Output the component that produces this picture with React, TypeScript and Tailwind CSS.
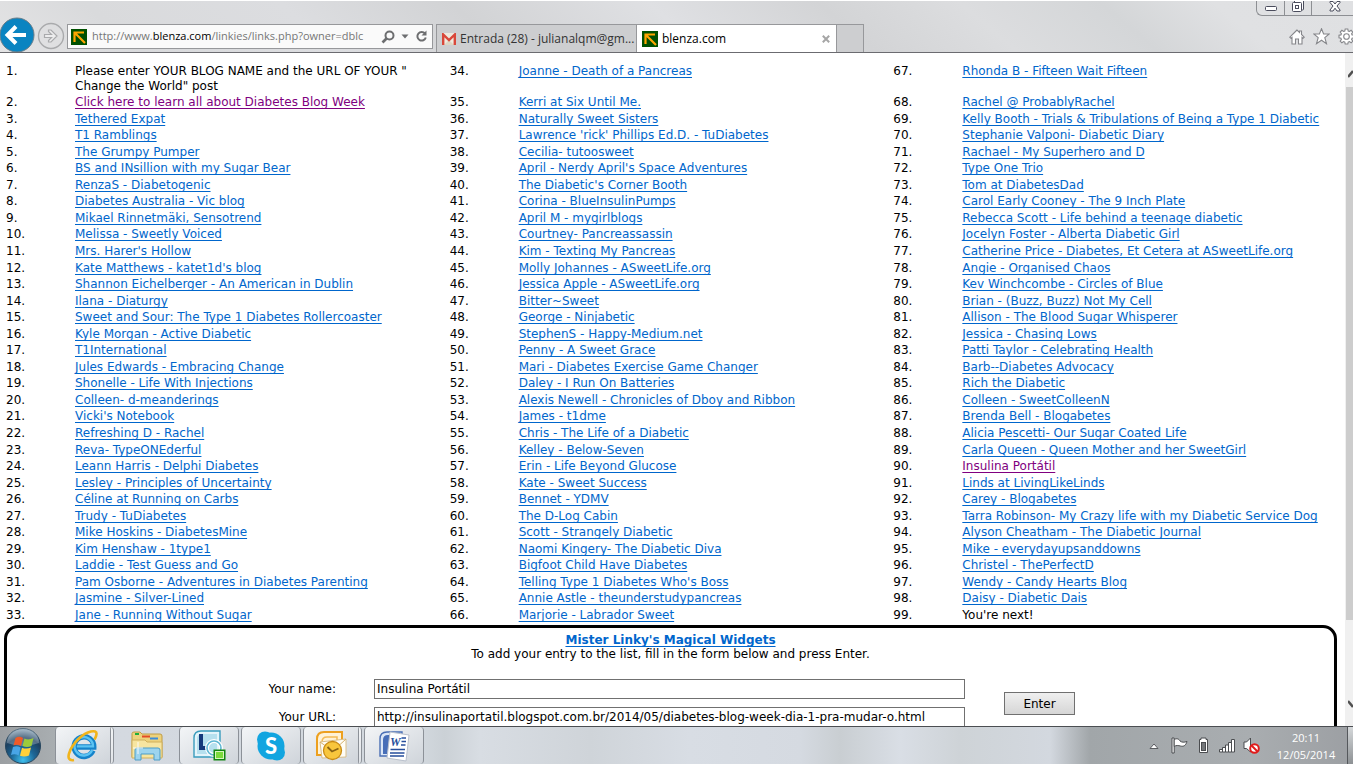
import type { ReactNode } from 'react';

type Entry = { text: string; kind?: 'plain' | 'visited' };

const visited = (text: string): Entry => ({ text, kind: 'visited' });
const plain = (text: string): Entry => ({ text, kind: 'plain' });
const link = (text: string): Entry => ({ text });

const columns: Entry[][] = [
    [
        plain('Please enter YOUR BLOG NAME and the URL OF YOUR " Change the World" post'),
        visited('Click here to learn all about Diabetes Blog Week'),
        ...[
            'Tethered Expat',
            'T1 Ramblings',
            'The Grumpy Pumper',
            'BS and INsillion with my Sugar Bear',
            'RenzaS - Diabetogenic',
            'Diabetes Australia - Vic blog',
            'Mikael Rinnetmäki, Sensotrend',
            'Melissa - Sweetly Voiced',
            "Mrs. Harer's Hollow",
            "Kate Matthews - katet1d's blog",
            'Shannon Eichelberger - An American in Dublin',
            'Ilana - Diaturgy',
            'Sweet and Sour: The Type 1 Diabetes Rollercoaster',
            'Kyle Morgan - Active Diabetic',
            'T1International',
            'Jules Edwards - Embracing Change',
            'Shonelle - Life With Injections',
            'Colleen- d-meanderings',
            "Vicki's Notebook",
            'Refreshing D - Rachel',
            'Reva- TypeONEderful',
            'Leann Harris - Delphi Diabetes',
            'Lesley - Principles of Uncertainty',
            'Céline at Running on Carbs',
            'Trudy - TuDiabetes',
            'Mike Hoskins - DiabetesMine',
            'Kim Henshaw - 1type1',
            'Laddie - Test Guess and Go',
            'Pam Osborne - Adventures in Diabetes Parenting',
            'Jasmine - Silver-Lined',
            'Jane - Running Without Sugar',
        ].map(link),
    ],
    [
        'Joanne - Death of a Pancreas',
        'Kerri at Six Until Me.',
        'Naturally Sweet Sisters',
        "Lawrence 'rick' Phillips Ed.D. - TuDiabetes",
        'Cecilia- tutoosweet',
        "April - Nerdy April's Space Adventures",
        "The Diabetic's Corner Booth",
        'Corina - BlueInsulinPumps',
        'April M - mygirlblogs',
        'Courtney- Pancreassassin',
        'Kim - Texting My Pancreas',
        'Molly Johannes - ASweetLife.org',
        'Jessica Apple - ASweetLife.org',
        'Bitter~Sweet',
        'George - Ninjabetic',
        'StephenS - Happy-Medium.net',
        'Penny - A Sweet Grace',
        'Mari - Diabetes Exercise Game Changer',
        'Daley - I Run On Batteries',
        'Alexis Newell - Chronicles of Dboy and Ribbon',
        'James - t1dme',
        'Chris - The Life of a Diabetic',
        'Kelley - Below-Seven',
        'Erin - Life Beyond Glucose',
        'Kate - Sweet Success',
        'Bennet - YDMV',
        'The D-Log Cabin',
        'Scott - Strangely Diabetic',
        'Naomi Kingery- The Diabetic Diva',
        'Bigfoot Child Have Diabetes',
        "Telling Type 1 Diabetes Who's Boss",
        'Annie Astle - theunderstudypancreas',
        'Marjorie - Labrador Sweet',
    ].map(link),
    [
        ...[
            'Rhonda B - Fifteen Wait Fifteen',
            'Rachel @ ProbablyRachel',
            'Kelly Booth - Trials & Tribulations of Being a Type 1 Diabetic',
            'Stephanie Valponi- Diabetic Diary',
            'Rachael - My Superhero and D',
            'Type One Trio',
            'Tom at DiabetesDad',
            'Carol Early Cooney - The 9 Inch Plate',
            'Rebecca Scott - Life behind a teenage diabetic',
            'Jocelyn Foster - Alberta Diabetic Girl',
            'Catherine Price - Diabetes, Et Cetera at ASweetLife.org',
            'Angie - Organised Chaos',
            'Kev Winchcombe - Circles of Blue',
            'Brian - (Buzz, Buzz) Not My Cell',
            'Allison - The Blood Sugar Whisperer',
            'Jessica - Chasing Lows',
            'Patti Taylor - Celebrating Health',
            'Barb--Diabetes Advocacy',
            'Rich the Diabetic',
            'Colleen - SweetColleenN',
            'Brenda Bell - Blogabetes',
            'Alicia Pescetti- Our Sugar Coated Life',
            'Carla Queen - Queen Mother and her SweetGirl',
        ].map(link),
        visited('Insulina Portátil'),
        ...[
            'Linds at LivingLikeLinds',
            'Carey - Blogabetes',
            'Tarra Robinson- My Crazy life with my Diabetic Service Dog',
            'Alyson Cheatham - The Diabetic Journal',
            'Mike - everydayupsanddowns',
            'Christel - ThePerfectD',
            'Wendy - Candy Hearts Blog',
            'Daisy - Diabetic Dais',
        ].map(link),
        plain("You're next!"),
    ],
];

const EntryText = ({ entry }: { entry: Entry }) => {
    if (entry.kind === 'plain') return <>{entry.text}</>;
    return (
        <a
            href="#"
            className={
                entry.kind === 'visited'
                    ? 'text-[#800080] underline underline-offset-2 [text-decoration-skip-ink:none]'
                    : 'text-[#0066cc] underline underline-offset-2 [text-decoration-skip-ink:none]'
            }
        >
            {entry.text}
        </a>
    );
};

const BlenzaIcon = () => (
    <svg width="16" height="16" viewBox="0 0 16 16" className="shrink-0">
        <rect width="16" height="16" fill="#005000" />
        <path d="M3.5 13V3.5H13M4 4L14 14" fill="none" stroke="#ffa500" strokeWidth="2.2" />
    </svg>
);

const BrowserBar = () => (
    <header className="flex h-[53px] shrink-0 items-end border-t border-b border-t-white border-b-[#6b6b70] bg-[linear-gradient(40deg,#e4e4e5_0%,#d9dadc_10%,#dcdde0_24%,#d2d3d5_36%,#dfe0e3_50%,#d3d4d6_62%,#dcdddf_72%,#d4d6d8_82%,#e0e1e3_90%,#dfe0e2_100%)] font-['Open_Sans',sans-serif] text-xs text-black">
        <button aria-label="Back" className="h-[35px] w-[35px] shrink-0">
            <svg width="35" height="35" viewBox="0 0 35 35">
                <circle cx="17" cy="18" r="17" fill="#0a84c1" stroke="#6a7d88" />
                <path d="M26 18H8M16 9.5L7.5 18L16 26.5" fill="none" stroke="#fff" strokeWidth="4" />
            </svg>
        </button>
        <button aria-label="Forward" className="mb-0.5 ml-0.5 h-7 w-7 shrink-0">
            <svg width="28" height="28" viewBox="0 0 28 28" fill="none" stroke="#a9aaac">
                <circle cx="14" cy="14" r="12.5" strokeWidth="1.4" />
                <path d="M7.5 12.5H14.5L11.5 9.5V8H14L20 14L14 20H11.5V18.5L14.5 15.5H7.5Z" fill="#ededee" strokeWidth="1.2" />
            </svg>
        </button>
        <div className="mb-[3px] ml-0.5 flex h-[25px] w-[366px] shrink-0 items-center border border-[#97989b] bg-[#fafafa] pl-[3px]">
            <BlenzaIcon />
            <div role="textbox" aria-label="Address" className="ml-[5px] w-[286px] shrink-0 whitespace-nowrap text-[11px] text-[#767676]">
                http://www.<span className="text-black">blenza.com</span>/linkies/links.php?owner=dblc
            </div>
            <button aria-label="Search" className="ml-[3px]">
                <svg width="14" height="14" viewBox="0 0 14 14" fill="none" stroke="#6d6e70">
                    <circle cx="8.5" cy="5.5" r="4" strokeWidth="2" />
                    <path d="M5.5 8.5L1.5 12.5" strokeWidth="2.6" />
                </svg>
            </button>
            <button aria-label="Address history" className="ml-1.5">
                <svg width="8" height="5" viewBox="0 0 8 5"><path d="M0.5 0.5H7.5L4 4.5Z" fill="#6d6e70" /></svg>
            </button>
            <button aria-label="Refresh" className="ml-1.5">
                <svg width="13" height="13" viewBox="0 0 13 13">
                    <path d="M10 3.5A4.3 4.3 0 1 0 10.8 7.5" fill="none" stroke="#6d6e70" strokeWidth="2" />
                    <path d="M11.5 0.5V5.5H6.5Z" fill="#6d6e70" />
                </svg>
            </button>
        </div>
        <nav className="ml-[3px] flex h-7 min-w-0 whitespace-nowrap">
            <button className="flex w-[201px] items-center gap-1 border border-b-0 border-[#97989b] bg-[#cdced0] pl-[5px] text-[#333]">
                <svg width="14" height="12" viewBox="0 0 14 12" className="shrink-0">
                    <rect width="14" height="12" fill="#eeeadf" />
                    <path d="M2 12L7 7L12 12Z" fill="#dcd6c4" />
                    <path d="M1.2 12V1.5L7 7L12.8 1.5V12" fill="none" stroke="#d9483b" strokeWidth="2.4" />
                </svg>
                Entrada (28) - julianalqm@gm...
            </button>
            <button className="flex w-[199px] items-center gap-1 border-t border-[#97989b] bg-white px-[5px]">
                <BlenzaIcon />
                blenza.com
                <svg width="8" height="8" viewBox="0 0 8 8" className="mr-px ml-auto"><path d="M0.8 0.8L7.2 7.2M7.2 0.8L0.8 7.2" stroke="#a6a6a6" strokeWidth="2" /></svg>
            </button>
            <button aria-label="New tab" className="w-7 border border-b-0 border-[#97989b] bg-[#cdced0]" />
        </nav>
        <div className="ml-auto flex h-full w-[97px] shrink-0 flex-col items-end justify-between pb-[7px]">
            <div className="flex h-[15px] w-[97px] items-center rounded-bl-md border-b border-l border-[#8d8f93]">
                <button aria-label="Minimize" className="flex h-full w-7 items-center justify-center border-r border-[#8d8f93]">
                    <svg width="12" height="5" viewBox="0 0 12 5"><rect x="0.5" y="0.5" width="11" height="4" rx="1" fill="#fff" stroke="#4a4c5c" /></svg>
                </button>
                <button aria-label="Restore" className="flex h-full w-[27px] items-start justify-center border-r border-[#8d8f93]">
                    <svg width="12" height="12" viewBox="0 0 12 12" fill="#fff" stroke="#4a4c5c">
                        <rect x="2.5" y="-2" width="9" height="11" rx="1" />
                        <rect x="0.5" y="1.5" width="9" height="9" rx="1" />
                        <rect x="3.5" y="4.5" width="3" height="3" />
                    </svg>
                </button>
                <button aria-label="Close" className="flex h-full flex-1 items-start justify-center pl-1">
                    <svg width="12" height="11" viewBox="0 0 12 11"><path d="M1 0.5H4L6 3L8 0.5H11V1.5L8 5L11 9V10H8L6 7.2L4 10H1V9L4 5L1 1.5Z" fill="#fff" stroke="#4a4c5c" /></svg>
                </button>
            </div>
            <div className="flex w-16 gap-2">
                <button aria-label="Home">
                    <svg width="16" height="16" viewBox="0 0 16 16" fill="#fff" stroke="#85868a" strokeWidth="1.1">
                        <path d="M8 1L0.8 8.2L2 9.3L3 8.5V15H6.5V10H9.5V15H13V8.5L14 9.3L15.2 8.2L12.5 5.5V2H10.5V3.5Z" />
                    </svg>
                </button>
                <button aria-label="Favorites">
                    <svg width="17" height="17" viewBox="0 0 17 17" fill="#fff" stroke="#85868a" strokeWidth="1.1">
                        <path d="M8.5 0.8L10.6 6H16.2L11.8 9.6L13.5 15.6L8.5 12.2L3.5 15.6L5.2 9.6L0.8 6H6.4Z" />
                    </svg>
                </button>
                <button aria-label="Tools" className="w-[15px] overflow-hidden">
                    <svg width="17" height="17" viewBox="0 0 17 17" fill="#fff" stroke="#85868a" strokeWidth="1.1" className="max-w-none">
                        <path d="M7.2 1H9.8L10.2 3L11.4 3.5L13.1 2.3L14.8 4L13.6 5.7L14.1 6.9L16 7.2V9.8L14.1 10.2L13.6 11.4L14.8 13.1L13.1 14.8L11.4 13.6L10.2 14.1L9.8 16H7.2L6.8 14.1L5.6 13.6L3.9 14.8L2.2 13.1L3.4 11.4L2.9 10.2L1 9.8V7.2L2.9 6.9L3.4 5.7L2.2 4L3.9 2.3L5.6 3.5L6.8 3Z" />
                        <circle cx="8.5" cy="8.5" r="2.8" />
                    </svg>
                </button>
            </div>
        </div>
    </header>
);

const LinkTable = () => (
    <table className="h-[561px] w-full table-fixed border-collapse text-left">
        <colgroup>
            {columns.map((_, i) => [<col key={`n${i}`} className="w-[69px]" />, <col key={`t${i}`} />])}
        </colgroup>
        <tbody>
            {columns[0].map((_, row) => (
                <tr key={row} className="align-top">
                    {columns.map((entries, col) => [
                        <td key={`n${col}`} className={row === 0 ? 'pl-px leading-[15px]' : 'pb-px pl-px leading-[15px]'}>{col * 33 + row + 1}.</td>,
                        <td key={`t${col}`} className={row === 0 ? 'pr-6 pl-px leading-[15px]' : 'pb-px pl-px leading-[15px] whitespace-nowrap'}>
                            <EntryText entry={entries[row]} />
                        </td>,
                    ])}
                </tr>
            ))}
        </tbody>
    </table>
);

const EntryForm = () => (
    <form className="h-[150px] rounded-[14px] border-[3px] border-black pt-[5px] text-center" onSubmit={e => e.preventDefault()}>
        <p className="leading-[14px] font-bold">
            <a href="#" className="text-[#0066cc] underline underline-offset-2 [text-decoration-skip-ink:none]">Mister Linky's Magical Widgets</a>
        </p>
        <p className="leading-[14px]">To add your entry to the list, fill in the form below and press Enter.</p>
        <div className="mt-[18px] flex justify-center">
            <div className="flex flex-col gap-2">
                <div className="flex items-center gap-[38px]">
                    <label htmlFor="name" className="w-[70px] text-right whitespace-nowrap">Your name:</label>
                    <input id="name" defaultValue="Insulina Portátil" className="h-5 w-[591px] border border-[#707070] bg-white px-0.5" />
                </div>
                <div className="flex items-center gap-[38px]">
                    <label htmlFor="url" className="w-[70px] text-right whitespace-nowrap">Your URL:</label>
                    <input id="url" defaultValue="http://insulinaportatil.blogspot.com.br/2014/05/diabetes-blog-week-dia-1-pra-mudar-o.html" className="h-5 w-[591px] border border-[#707070] bg-white px-0.5" />
                </div>
            </div>
            <button type="submit" className="mt-[13px] ml-[39px] h-[23px] w-[71px] border border-[#707070] bg-linear-to-b from-[#efefef] to-[#d6d6d6]">Enter</button>
        </div>
    </form>
);

const Scrollbar = () => (
    <div aria-hidden="true" className="flex w-2 shrink-0 flex-col items-end overflow-hidden bg-[#f0f0f0]">
        <div className="flex h-[34px] w-[5px] items-center pt-2">
            <svg width="5" height="8" viewBox="0 0 5 8"><path d="M0 7L5 1" stroke="#505050" strokeWidth="2.5" /></svg>
        </div>
        <div className="h-[533px] w-[7px] bg-[#cdcdcd]" />
        <svg width="5" height="8" viewBox="0 0 5 8" className="mt-auto mb-[18px]"><path d="M0 1L5 7" stroke="#505050" strokeWidth="2.5" /></svg>
    </div>
);

const StartIcon = () => (
    <svg width="38" height="37" viewBox="0 0 38 37">
        <defs>
            <radialGradient id="orb" cx="50%" cy="90%" r="85%">
                <stop offset="0" stopColor="#3fc0ee" />
                <stop offset="0.4" stopColor="#1c6797" />
                <stop offset="0.75" stopColor="#1d3f5e" />
                <stop offset="1" stopColor="#7d98ad" />
            </radialGradient>
        </defs>
        <circle cx="19" cy="19" r="17.5" fill="url(#orb)" stroke="#26465e" />
        <path d="M3 16A16 15 0 0 1 35 16Q19 22 3 16Z" fill="#fff" opacity="0.25" />
        <path d="M11.5 11Q15 8.5 19 11L17 19Q13.5 17 9.5 18.5Z" fill="#ef5a28" />
        <path d="M20.5 11.5Q24.5 13.5 29.5 11L27.5 19Q23 21 18.5 19Z" fill="#9ccb3b" />
        <path d="M9 20Q13 18.5 16.6 20.5L14.6 28.5Q11 26.5 7 28Z" fill="#49a5e6" />
        <path d="M18 20.7Q22.5 22.5 27 20.5L25 28.5Q20.5 30.5 16 28.8Z" fill="#ffd13b" />
    </svg>
);

const ExplorerIcon = () => (
    <svg width="32" height="34" viewBox="0 0 32 34" fill="none">
        <path d="M26 21.5A9.8 9.8 0 1 1 26.8 18H10" stroke="#1683ca" strokeWidth="5.4" />
        <path d="M25.2 21A9.2 9.2 0 1 1 26 17.4H10" stroke="#5cc3f2" strokeWidth="2.4" />
        <path d="M7 31C-3 33 2 19 12 9.5C20 2 30 0 29.5 5C29.3 7 28.5 9 27.5 10.5" stroke="#f1b41c" strokeWidth="2.6" />
    </svg>
);

const FolderIcon = () => (
    <svg width="34" height="32" viewBox="0 0 34 32">
        <path d="M2 5V3.5Q2 2 4 2H10L12 4H30Q32 4 32 6V27H2Z" fill="#edd27c" stroke="#c09c45" />
        <path d="M5 3H9V5H5Z" fill="#1fae3c" />
        <path d="M12 5.5H20V7.5H12Z" fill="#e34b27" />
        <path d="M20 7.5H28V9.5H20Z" fill="#3b8ddb" />
        <path d="M2 10H15L17 12H32V28H2Z" fill="#f7e5a0" stroke="#d0b05c" />
        <path d="M5 30V20Q5 18 7 18H28Q30 18 30 20V30H24V24H11V30Z" fill="#9cd4ee" stroke="#4d9dc6" />
        <path d="M8 12V24M3 18H13" stroke="#fff" opacity="0.9" />
    </svg>
);

const LyncIcon = () => (
    <svg width="34" height="33" viewBox="0 0 34 33">
        <path d="M2 9Q2 2 9 2H28V28H2Z" fill="#e3f4fa" stroke="#3a9cbd" strokeWidth="1.4" />
        <path d="M5 10Q5 5 10 5H25V25H5Z" fill="#b6e0ee" />
        <path d="M9 5V19H15" fill="none" stroke="#15397b" strokeWidth="4" />
        <circle cx="22" cy="19" r="7" fill="none" stroke="#fff" strokeWidth="4" />
        <circle cx="22" cy="19" r="7" fill="none" stroke="#5fb6d3" strokeWidth="1.6" />
        <rect x="21.5" y="20.5" width="12" height="11" fill="#118511" />
        <rect x="23.5" y="22.5" width="8" height="7" fill="#7cdb3c" stroke="#d9f5c0" />
    </svg>
);

const SkypeIcon = () => (
    <svg width="32" height="32" viewBox="0 0 32 32">
        <circle cx="16" cy="16" r="13.5" fill="#12a5e0" />
        <circle cx="10" cy="9.5" r="8" fill="#12a5e0" />
        <circle cx="22" cy="22.5" r="8" fill="#12a5e0" />
        <text x="16" y="23.5" textAnchor="middle" fontFamily="Lato, sans-serif" fontWeight="900" fontSize="22" fill="#fff">S</text>
    </svg>
);

const OutlookIcon = () => (
    <svg width="33" height="32" viewBox="0 0 33 32">
        <path d="M2 9Q2 2 9 2H27V25H2Z" fill="#fff2d6" stroke="#eda01f" strokeWidth="2" />
        <path d="M7 12Q7 7 12 7H22V20H7Z" fill="none" stroke="#f3bb55" strokeWidth="1.5" />
        <path d="M5 12L31 9V27L7 28Z" fill="#fffdf6" stroke="#d9bf8c" />
        <path d="M5 12L18 21L31 9" fill="none" stroke="#d6b06a" />
        <circle cx="17.5" cy="20.5" r="9" fill="#f8c63d" stroke="#c98b15" strokeWidth="1.3" />
        <path d="M12.5 17L17 21.5L23.5 18.5" fill="none" stroke="#8a6414" strokeWidth="1.8" />
    </svg>
);

const WordIcon = () => (
    <svg width="33" height="33" viewBox="0 0 33 33">
        <path d="M2 10Q2 3 9 3H24V27H2Z" fill="#dbe6f6" stroke="#4a6fb5" strokeWidth="1.4" />
        <path d="M5 11Q5 6 10 6H14V25H5Z" fill="#476eb8" />
        <path d="M12 3L31 6L28 32L9 29Z" fill="#fff" stroke="#b9c0cc" />
        <text x="12" y="17" fontFamily="Liberation Serif, serif" fontWeight="bold" fontStyle="italic" fontSize="12" fill="#264e9c">W</text>
        <path d="M23.5 9H28M23.5 12.5H28M23 16H27.5M12.5 20.5H27M12 24H26.5M12 27H26" stroke="#264e9c" strokeWidth="1.6" />
    </svg>
);

type TaskProps = { label: string; className: string; children: ReactNode };

const Task = ({ label, className, children }: TaskProps) => (
    <button aria-label={label} className={`flex h-full shrink-0 items-center justify-center ${className}`}>
        {children}
    </button>
);

const lit = 'w-[60px] rounded-sm border-x border-[#8c9198] bg-linear-to-br from-[#f3f5f7] to-[#cfd4da]';
const stacked = 'w-[59px] rounded-sm border-r-4 border-l border-double border-[#8c9198] bg-linear-to-br from-[#f3f5f7] to-[#cfd4da]';

const Taskbar = () => (
    <footer className="flex h-[39px] shrink-0 border-t border-b border-t-[#4b4e52] border-b-white bg-[linear-gradient(to_right,#9b9fa2_0px,#a9aeb1_56px,#d4d9e0_114px,#d2d8de_420px,#cbd1d6_445px,#d8dde3_480px,#cfd4d9_590px,#d8dde4_690px,#d5dae1_800px,#c9ced2_840px,#d9dee5_900px,#ced3d7_960px,#d3d8df_1050px,#a1a6a9_1090px,#a9adb0_1250px,#9c9fa3_100%)]">
        <Task label="Start" className="w-[55px] pr-[9px]"><StartIcon /></Task>
        <Task label="Internet Explorer" className={stacked}><ExplorerIcon /></Task>
        <Task label="Windows Explorer" className="w-[65px]"><FolderIcon /></Task>
        <div className="flex gap-0.5">
            <Task label="Lync" className={lit}><LyncIcon /></Task>
            <Task label="Skype" className={lit}><SkypeIcon /></Task>
            <Task label="Outlook" className={stacked}><OutlookIcon /></Task>
            <Task label="Word" className={lit}><WordIcon /></Task>
        </div>
        <div className="ml-auto flex items-center">
            <button aria-label="Show hidden icons">
                <svg width="10" height="6" viewBox="0 0 10 6"><path d="M1 5.5L5 1L9 5.5Z" fill="#fff" stroke="#5a5d61" /></svg>
            </button>
            <svg width="17" height="17" viewBox="0 0 17 17" className="ml-3" fill="#fff" stroke="#4b4d50">
                <path d="M1 1H3.2V16H1Z" />
                <path d="M3.2 2.5C6 1 8 2 9 4C11 5.5 13 5.5 16 4.5C15 8 13 10 9.5 9C7.5 8.5 5 8 3.2 9.5Z" />
            </svg>
            <svg width="11" height="17" viewBox="0 0 11 17" className="ml-[10px]" fill="#fff" stroke="#4b4d50">
                <path d="M3 2.5V1H8V2.5H9.5V15.5H1.5V2.5Z" />
                <rect x="3.5" y="5.5" width="4" height="8" fill="#75787b" />
            </svg>
            <svg width="17" height="14" viewBox="0 0 17 14" className="ml-[10px]" fill="#fff" stroke="#4b4d50">
                <path d="M0.5 10.5H3.5V13H0.5ZM3.5 8.5H6.5V13H3.5ZM6.5 6H9.5V13H6.5ZM9.5 3.5H12.5V13H9.5ZM12.5 0.5H15.5V13H12.5Z" />
            </svg>
            <svg width="17" height="17" viewBox="0 0 17 17" className="ml-[7px]">
                <path d="M1 5H3.5L7.5 1V15L3.5 11.5H1Z" fill="#fff" stroke="#4b4d50" />
                <circle cx="11.5" cy="11.5" r="4.3" fill="#fff" stroke="#e01b1b" strokeWidth="2" />
                <path d="M8.5 8.5L14.5 14.5" stroke="#e01b1b" strokeWidth="2" />
            </svg>
            <div className="ml-[15px] w-[62px] text-center font-['Open_Sans',sans-serif] text-[11px] leading-[17px] text-white">
                <div>20:11</div>
                <div>12/05/2014</div>
            </div>
            <button aria-label="Show desktop" className="ml-[10px] h-full w-[6px] border-l border-[#55585c] bg-linear-to-b from-[#d5d8da] to-[#8d9194]" />
        </div>
    </footer>
);

export default function App() {
    return (
        <div className="flex h-screen flex-col overflow-hidden bg-white font-['DejaVu_Sans',sans-serif] text-xs text-black">
            <BrowserBar />
            <div className="flex min-h-0 flex-1">
                <main className="min-w-0 flex-1 overflow-hidden pt-[11px] pr-2 pl-1">
                    <div className="px-px">
                        <LinkTable />
                    </div>
                    <EntryForm />
                </main>
                <Scrollbar />
            </div>
            <Taskbar />
        </div>
    );
}
